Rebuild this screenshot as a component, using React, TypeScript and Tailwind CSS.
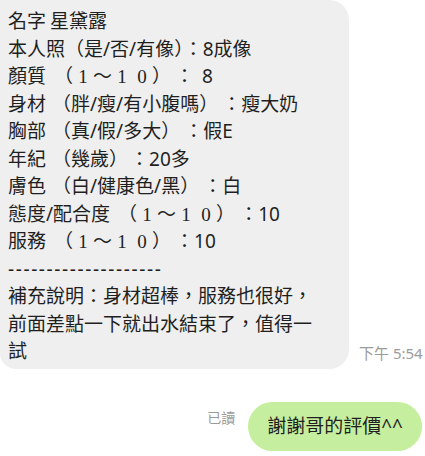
import React from 'react';

// full-width digit drawn in a serif face
const Fw = ({ c }: { c: string }) => (
  <span className="inline-block w-[20px] text-center font-['Liberation_Serif',serif]">{c}</span>
);

const Gap = ({ w = 'w-[6px]' }: { w?: string }) => <span className={`inline-block ${w}`} />;

const Scale = () => (
  <>
    <Gap w="w-[8px]" />（<Fw c="1" />～<Fw c="1" /><Fw c="0" />）<Gap w="w-[4px]" />
  </>
);

const App = () => {
  return (
    <div className="w-[425px] h-[456px] bg-white overflow-hidden font-['Noto_Sans','Noto_Sans_CJK_TC',sans-serif] text-[#1f1f1f]">
      {/* incoming message */}
      <div className="flex items-end">
        <div className="w-[349px] shrink-0 bg-[#efefef] rounded-tr-[20px] rounded-br-[20px] rounded-bl-[16px] pl-2 pt-2 pb-[3px] text-[19px] leading-[27.5px] whitespace-nowrap">
          <div>名字<Gap w="w-[4px]" />星黛露</div>
          <div>本人照（是/否/有像）：8成像</div>
          <div>顏質<Scale />：<Gap w="w-[8px]" />8</div>
          <div>身材<Gap />（胖/瘦/有小腹嗎）<Gap w="w-[4px]" />：瘦大奶</div>
          <div>胸部<Gap />（真/假/多大）<Gap w="w-[4px]" />：假E</div>
          <div>年紀<Gap />（幾歲）<Gap w="w-[2px]" />：20多</div>
          <div>膚色<Gap />（白/健康色/黑）<Gap w="w-[4px]" />：白</div>
          <div>態度/配合度<Scale />：10</div>
          <div>服務<Scale />：10</div>
          <div className="tracking-[1.6px]">--------------------</div>
          <div>補充說明：身材超棒，服務也很好，</div>
          <div>前面差點一下就出水結束了，值得一</div>
          <div>試</div>
        </div>
        <div className="ml-[10px] mb-[4px] text-[15px] text-[#9b9b9b] whitespace-nowrap">下午 5:54</div>
      </div>

      {/* outgoing message */}
      <div className="flex justify-end items-start mt-[33px] pr-[3px]">
        <div className="mt-[5px] mr-[13px] text-[14px] text-[#9b9b9b]">已讀</div>
        <div className="h-[49px] px-[19px] flex items-center rounded-full bg-[#c5ef9e] text-[19px]">
          謝謝哥的評價^^
        </div>
      </div>
    </div>
  );
};

export default App;
